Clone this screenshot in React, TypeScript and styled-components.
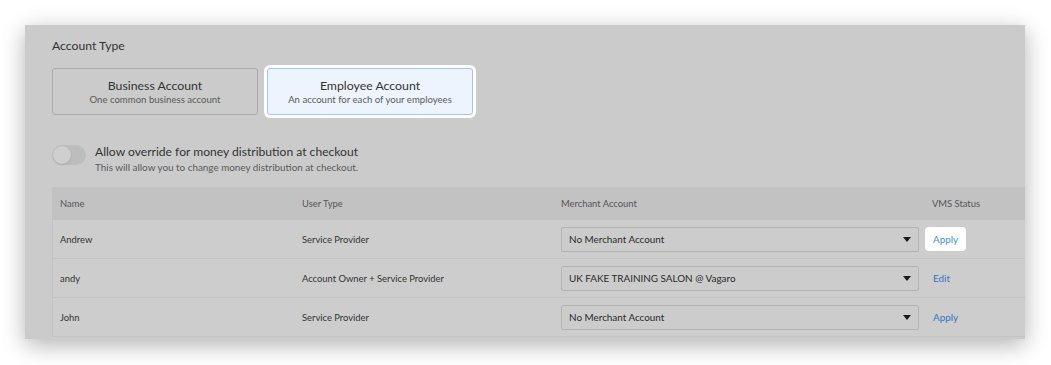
import * as React from "react";
import styled, { createGlobalStyle } from "styled-components";

const GlobalStyles = createGlobalStyle`
  html, body {
    margin: 0;
    padding: 0;
    background: #ffffff;
    font-family: Lato, "Open Sans", "Liberation Sans", sans-serif;
    color: #2f2f2f;
  }
  * { box-sizing: border-box; }
`;

const Page = styled.div`
  width: 1051px;
  height: 365px;
  padding: 25px 26px 26px 25px;
`;

const Panel = styled.div`
  width: 1000px;
  height: 314px;
  background: #cbcbcb;
  box-shadow: 0 6px 22px rgba(0, 0, 0, 0.3);
  overflow: hidden;
  padding: 13px 0 0 27px;
`;

const SectionTitle = styled.div`
  font-size: 12.2px;
  line-height: 15px;
  margin-bottom: 15px;
  color: #333;
`;

const CardRow = styled.div`
  display: flex;
  gap: 9px;
  align-items: center;
`;

const Card = styled.div<{ $active?: boolean }>`
  width: 206px;
  height: 47px;
  border-radius: 3px;
  border: 1px solid ${(p) => (p.$active ? "#9fc7ee" : "#ababab")};
  background: ${(p) => (p.$active ? "#eef4fd" : "#cbcbcb")};
  box-shadow: ${(p) => (p.$active ? "0 0 0 3px #ffffff" : "none")};
  display: flex;
  flex-direction: column;
  align-items: center;
  justify-content: center;
`;

const CardTitle = styled.div`
  font-size: 12.3px;
  line-height: 15px;
  color: #333;
`;

const CardSub = styled.div`
  font-size: 9.6px;
  line-height: 13px;
  color: #5a5a5a;
`;

const ToggleRow = styled.div`
  display: flex;
  align-items: flex-start;
  gap: 9px;
  margin-top: 29px;
`;

const Toggle = styled.div`
  width: 34px;
  height: 20px;
  border-radius: 10px;
  background: #bdbdbd;
  padding: 1px;
  flex-shrink: 0;
  margin-top: 1px;
`;

const Knob = styled.div`
  width: 18px;
  height: 18px;
  border-radius: 50%;
  background: #cfcfcf;
  box-shadow: 0 1px 2px rgba(0, 0, 0, 0.12);
`;

const ToggleText = styled.div`
  display: flex;
  flex-direction: column;
`;

const ToggleLabel = styled.div`
  font-size: 12.1px;
  line-height: 16px;
  color: #333;
`;

const ToggleSub = styled.div`
  font-size: 9.9px;
  line-height: 14px;
  color: #5a5a5a;
`;

const Table = styled.div`
  width: 1010px;
  margin-top: 13px;
  border-left: 1px solid #c2c2c2;
`;

const Row = styled.div<{ $head?: boolean }>`
  display: grid;
  grid-template-columns: 242px 259px 371px 1fr;
  align-items: center;
  height: ${(p) => (p.$head ? "33px" : "39px")};
  background: ${(p) => (p.$head ? "#c2c2c2" : "#cdcdcd")};
  border-bottom: ${(p) => (p.$head ? "none" : "1px solid #c3c3c3")};
  font-size: 9.4px;
  color: ${(p) => (p.$head ? "#555" : "#333")};
`;

const Cell = styled.div`
  padding-left: 7px;
  white-space: nowrap;
`;

const ActionCell = styled.div`
  padding-left: 0;
`;

const SelectCell = styled.div`
  padding: 0 6px 0 7px;
`;

const Select = styled.div`
  height: 25px;
  border: 1px solid #b3b3b3;
  border-radius: 2px;
  background: #cccccc;
  display: flex;
  align-items: center;
  justify-content: space-between;
  padding: 0 7px 0 7px;
  font-size: 9.9px;
  color: #2a2a2a;
`;

const Caret = styled.span`
  width: 0;
  height: 0;
  border-left: 4px solid transparent;
  border-right: 4px solid transparent;
  border-top: 5px solid #1a1a1a;
`;

const LinkButton = styled.div<{ $spot?: boolean }>`
  display: inline-flex;
  align-items: center;
  height: 24px;
  padding: 0 8px;
  border-radius: 4px;
  font-size: 9.9px;
  background: ${(p) => (p.$spot ? "#ffffff" : "transparent")};
  color: ${(p) => (p.$spot ? "#3d93dc" : "#2f77c0")};
`;

const employees = [
  { name: "Andrew", type: "Service Provider", merchant: "No Merchant Account", action: "Apply", spot: true },
  { name: "andy", type: "Account Owner + Service Provider", merchant: "UK FAKE TRAINING SALON @ Vagaro", action: "Edit" },
  { name: "John", type: "Service Provider", merchant: "No Merchant Account", action: "Apply" },
];

export default function App() {
  return (
    <Page>
      <GlobalStyles />
      <Panel>
        <SectionTitle>Account Type</SectionTitle>
        <CardRow>
          <Card>
            <CardTitle>Business Account</CardTitle>
            <CardSub>One common business account</CardSub>
          </Card>
          <Card $active>
            <CardTitle>Employee Account</CardTitle>
            <CardSub>An account for each of your employees</CardSub>
          </Card>
        </CardRow>
        <ToggleRow>
          <Toggle>
            <Knob />
          </Toggle>
          <ToggleText>
            <ToggleLabel>Allow override for money distribution at checkout</ToggleLabel>
            <ToggleSub>This will allow you to change money distribution at checkout.</ToggleSub>
          </ToggleText>
        </ToggleRow>
        <Table>
          <Row $head>
            <Cell>Name</Cell>
            <Cell>User Type</Cell>
            <Cell>Merchant Account</Cell>
            <Cell>VMS Status</Cell>
          </Row>
          {employees.map((e) => (
            <Row key={e.name}>
              <Cell>{e.name}</Cell>
              <Cell>{e.type}</Cell>
              <SelectCell>
                <Select>
                  <span>{e.merchant}</span>
                  <Caret />
                </Select>
              </SelectCell>
              <ActionCell>
                <LinkButton $spot={e.spot}>{e.action}</LinkButton>
              </ActionCell>
            </Row>
          ))}
        </Table>
      </Panel>
    </Page>
  );
}
